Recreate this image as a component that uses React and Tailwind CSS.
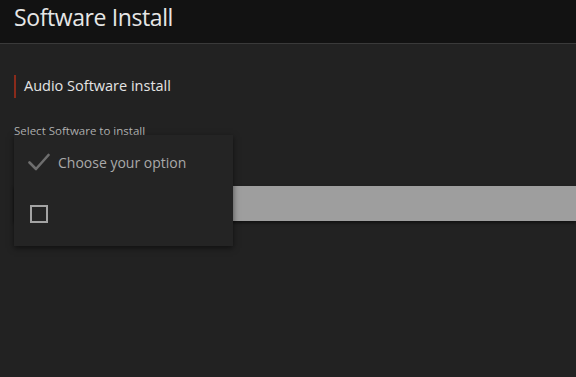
export default function App() {
  const font = { fontFamily: '"Open Sans", "Noto Sans", sans-serif' };
  return (
    <div className="w-[576px] h-[377px] overflow-hidden bg-[#222222]" style={font}>
      <header className="h-[44px] bg-[#121212] border-b border-[#3a3a3a] px-[14px] flex items-start">
        <h1 className="text-[23px] leading-[34px] text-[#e6e6e6] font-normal tracking-[-0.4px]">Software Install</h1>
      </header>
      <main className="pl-[14px] pt-[31px]">
        <div className="border-l-2 border-[#8a2b1b] h-[23px] pl-[8px] flex items-center">
          <span className="text-[14.5px] text-[#e4e4e4] leading-none">Audio Software install</span>
        </div>
        <div className="relative mt-[26px]">
          <div className="text-[11.5px] leading-[13px] text-[#b4b4b4] h-[11px] overflow-visible">Select Software to install</div>
          <div className="mt-[51px] h-[35px] bg-[#9e9e9e] shadow-[0_2px_3px_rgba(0,0,0,0.5)]" />
          <div className="absolute left-0 top-[11px] w-[219px] h-[111px] bg-[#242424] shadow-[0_2px_6px_rgba(0,0,0,0.55)] pt-[1px]">
            <div className="h-[52px] flex items-center pl-[14px] gap-[8px]">
              <svg width="22" height="18" viewBox="0 0 22 18" fill="none">
                <path d="M1.5 9.5 L8 16 L20.5 2" stroke="#6e6e6e" strokeWidth="2.6" strokeLinecap="round" strokeLinejoin="round" />
              </svg>
              <span className="text-[14px] text-[#a9a9a9]">Choose your option</span>
            </div>
            <div className="h-[51px] flex items-center pl-[16px]">
              <div className="w-[18px] h-[18px] border-2 border-[#a3a3a3]" />
            </div>
          </div>
        </div>
      </main>
    </div>
  );
}
